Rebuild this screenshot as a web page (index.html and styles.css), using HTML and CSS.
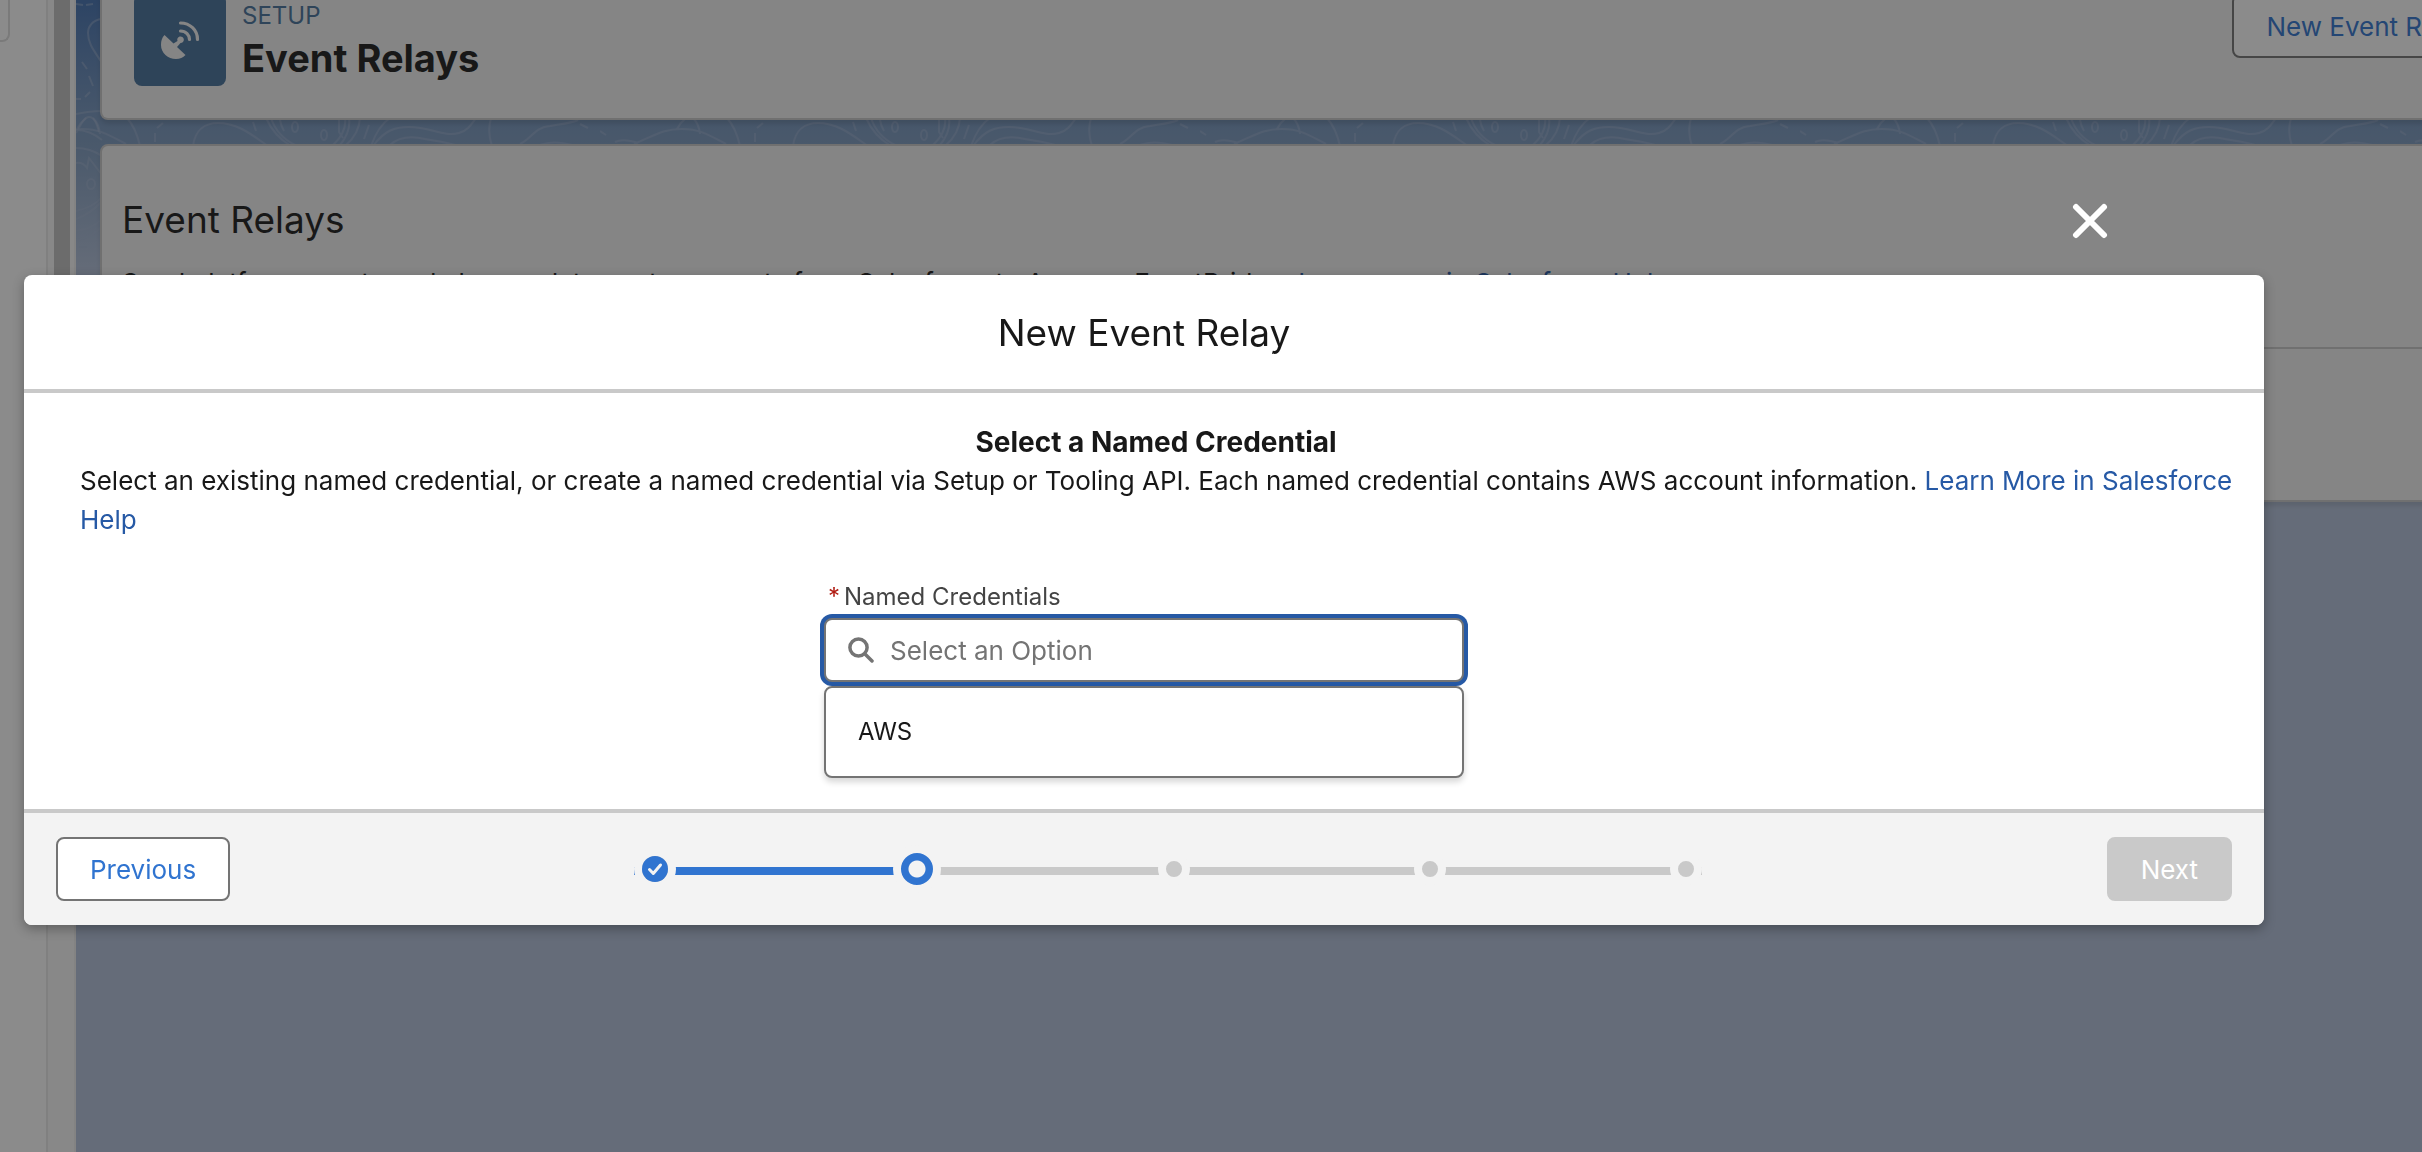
FILE: index.html
```html
<!DOCTYPE html>
<html lang="en">
<head>
<meta charset="utf-8">
<title>Event Relays</title>
<link rel="stylesheet" href="styles.css">
</head>
<body>
<div class="app">
  <aside class="sidebar"><div class="sidebar-card"></div></aside>
  <div class="gutter"><div class="scroll-thumb"></div></div>
  <main class="workspace">
    <svg class="contours" aria-hidden="true">
      <defs>
        <pattern id="topo" width="600" height="280" patternUnits="userSpaceOnUse" x="-76">
          <g fill="none" stroke="#a3b5d2" stroke-opacity=".45" stroke-width="2">
            <path d="M15 142q8-4 23 1M34 144C54 136 62 129 82 129s30 8 44 15M77 129q3-6 9-11M93 118q6 6 7 16M127 118q9 10 13 28M155 142v-9M157 128l6-5M193 146c2-16 12-23 25-23 20 0 34 12 50 23M253 122l3 9M266 118q8 18 25 28M271 118q6 18 24 27M280 120q1 6 4 11M345 118q2 14-12 27M339 120v12l4 6M349 118q2 14-9 27M360 118q-1 16-14 27M369 125l-5 14M390 118q-12 8-19 28M373 146c12-16 22-19 36-19 22 0 34 10 50 6 8-2 12-8 17-15M390 145c10-9 22-9 35-6 10 2 20 3 30 6M491 118q-4 14 1 28M520 144c12-6 15-17 30-18 12-2 22-3 28-6M540 145q14-5 32 0M0 131l6 4M580 124l8 4"/>
            <ellipse cx="295" cy="127" rx="3" ry="5"/>
            <ellipse cx="324" cy="135" rx="3" ry="5"/>
          </g>
        </pattern>
      </defs>
      <rect width="100%" height="280" fill="url(#topo)"/>
      <g transform="translate(-76 0)" fill="none" stroke="#a3b5d2" stroke-opacity=".45" stroke-width="2">
        <path d="M76 4l7 1M86 5l7-1M102 19c-10 1-14 8-14 14 0 12 8 20 14 30M82 62l5 7M89 76l4 10M90 92l-5 5M76 99h5M76 114q14-3 26-3M76 133c3-4 7-16 13-16s8 8 10 15M76 130q14 0 26 10M76 148q14 0 26 8M76 163q7-1 11 5l2-10 13 17M76 211q18-4 26-14M76 219q16-6 26-18M76 231q16-2 26-12M76 240q16-2 26-14M79 247h8"/>
        <ellipse cx="91" cy="184" rx="4" ry="5"/>
      </g>
    </svg>
    <header class="page-header">
      <span class="tile">
        <svg viewBox="160 20 40 40" width="40" height="40" aria-hidden="true">
          <path fill="#f3f3f3" d="M164.500 35L173.500 43.500 177.500 41A3.300 3.300 0 1 1 180.500 43L177 47 185.500 55C183 57.500 180 59 176 59C168 59 161 53 161 45C161 41 162 37.500 164.500 35Z"/>
          <path fill="none" stroke="#f3f3f3" stroke-width="3.200" stroke-linecap="round" d="M180.500 31C186 31 189.500 35 189.500 39.500M180.500 23C190 23 197.500 30 197.500 39.500"/>
        </svg>
      </span>
      <div class="page-title">
        <p class="eyebrow">SETUP</p>
        <h1>Event Relays</h1>
      </div>
      <button class="btn btn-neutral" type="button">New Event Relay</button>
    </header>
    <section class="card">
      <div class="card-top">
        <h2>Event Relays</h2>
        <p>Send platform events and change data capture events from Salesforce to Amazon EventBridge. <a href="#">Learn more in Salesforce Help</a></p>
      </div>
      <div class="card-rest"></div>
    </section>
  </main>
</div>
<div class="backdrop"></div>
<div class="dialog-layer">
  <button class="close" type="button" aria-label="Close">
    <svg viewBox="0 0 36 40" width="36" height="40" aria-hidden="true"><path d="M4 6l28 28M32 6L4 34" fill="none" stroke="#fff" stroke-width="6" stroke-linecap="round"/></svg>
  </button>
  <section class="dialog" role="dialog" aria-labelledby="dlg-title">
    <header class="dialog-head"><h2 id="dlg-title">New Event Relay</h2></header>
    <div class="dialog-body">
      <div class="intro">
        <h3>Select a Named Credential</h3>
        <p>Select an existing named credential, or create a named credential via Setup or Tooling API. Each named credential contains AWS account information. <a href="#">Learn More in Salesforce Help</a></p>
      </div>
      <div class="field">
        <label for="cred"><span class="req">*</span>Named Credentials</label>
        <div class="combo">
          <svg viewBox="0 0 26 26" width="26" height="26" aria-hidden="true"><g fill="none" stroke="#747474" stroke-width="3.500" stroke-linecap="round"><circle cx="10.500" cy="10.500" r="8.600"/><path d="M17 17l7 7"/></g></svg>
          <input id="cred" type="text" placeholder="Select an Option">
        </div>
        <ul class="options" role="listbox"><li role="option">AWS</li></ul>
      </div>
    </div>
    <footer class="dialog-foot">
      <button class="btn btn-neutral" type="button">Previous</button>
      <ol class="progress">
        <li class="step step-done"><svg viewBox="0 0 26 26" width="26" height="26" aria-hidden="true"><circle cx="13" cy="13" r="13" fill="#3074d0"/><path d="M7.500 13.500l3.800 4L18.500 9" fill="none" stroke="#f3f3f3" stroke-width="3" stroke-linecap="round" stroke-linejoin="round"/></svg></li>
        <li class="step step-active"></li>
        <li class="step"></li>
        <li class="step"></li>
        <li class="step"></li>
      </ol>
      <button class="btn btn-next" type="button" disabled>Next</button>
    </footer>
  </section>
</div>
</body>
</html>
```
FILE: styles.css
```css
* { box-sizing: border-box; }
body {
  margin: 0;
  font: 26px/39px Inter, "Liberation Sans", sans-serif;
  color: #181818;
}
h1, h2, h3, p, ul, ol { margin: 0; padding: 0; }
ul, ol { list-style: none; }
a { color: #2659a5; text-decoration: none; }
button, input { font: inherit; }

/* page behind the dialog */
.app { display: flex; min-height: 100vh; overflow: hidden; }
.sidebar { flex: 0 0 48px; background: #fff; border-right: 2px solid #e9e9e9; }
.sidebar-card { width: 10px; height: 42px; border: solid #dcdcdc; border-width: 0 2px 2px 0; border-radius: 0 0 8px 0; }
.gutter { flex: 0 0 28px; padding: 0 4px 0 6px; background: #f8f8f8; border-right: 2px solid #eee; }
.scroll-thumb { width: 16px; height: 50vh; background: #c0c0c0; }
.workspace {
  position: relative;
  flex: 1 0 auto;
  width: calc(100% + 66px);
  padding: 0 24px;
  background: #b3c1da linear-gradient(#4270b0, #7394be 110px, #7c9abf 145px, #b3c1da 275px) no-repeat;
}
.contours { position: absolute; inset: 0; width: 100%; height: 280px; }
.page-header {
  position: relative;
  display: flex;
  align-items: flex-start;
  margin-top: -6px;
  padding: 0 32px 32px;
  background: #f3f3f3;
  border: 2px solid #c9c9c9;
  border-top: 0;
  border-radius: 0 0 8px 8px;
  box-shadow: 0 4px 4px rgba(0, 0, 0, .12);
}
.tile { display: flex; align-items: center; justify-content: center; width: 92px; height: 92px; border-radius: 8px; background: #45709a; }
.page-title { flex: 1; margin: 4px 16px; }
.eyebrow { font-size: 24px; line-height: 36px; color: #45709a; }
h1 { font-size: 38px; line-height: 48px; font-weight: 700; }
h2 { font-size: 37px; line-height: 48px; font-weight: 400; }
.card { position: relative; margin-top: 24px; background: #f3f3f3; border: 2px solid #c9c9c9; border-radius: 8px; box-shadow: 0 4px 4px rgba(0, 0, 0, .1); }
.card-top { padding: 50px 20px 45px; border-bottom: 2px solid #c9c9c9; }
.card-top p { margin-top: 19px; }
.card-rest { height: 151px; }
.backdrop { position: fixed; inset: 0; background: rgba(24, 24, 24, .5); }

.btn { height: 64px; padding: 0 32px; border: 2px solid #747474; border-radius: 8px; line-height: 39px; white-space: nowrap; }
.btn-neutral { background: #fff; color: #3074d0; }
.btn-next { background: #c9c9c9; border-color: #c9c9c9; color: #fff; }

/* dialog */
.dialog-layer { position: absolute; top: 0; left: 0; right: 0; padding: 201px 158px 24px 24px; }
.close { display: block; margin: 0 156px 34px auto; padding: 0; height: 40px; border: 0; background: none; }
.close svg { display: block; }
.dialog { background: #fff; border-radius: 8px; box-shadow: 0 4px 12px rgba(0, 0, 0, .3); }
.dialog-head { padding: 34px 32px 32px; border-bottom: 4px solid #c9c9c9; text-align: center; }
.dialog-body { padding: 31px 32px; }
.intro { padding-left: 24px; }
.intro p { margin-right: -12px; }
h3 { font-size: 28px; line-height: 37px; font-weight: 700; text-align: center; }
.field { position: relative; width: 640px; max-width: 100%; margin: 40px auto 0; padding-bottom: 96px; }
.field label { display: block; padding: 0 4px 3px; font-size: 24px; line-height: 36px; color: #444; }
.req { margin-right: 4px; color: #b11b12; }
.combo {
  display: flex;
  align-items: center;
  gap: 16px;
  height: 64px;
  padding: 0 22px;
  background: #fff;
  border: 2px solid #747474;
  border-radius: 8px;
  box-shadow: 0 0 0 4px #2659a5;
}
.combo input { flex: 1; min-width: 0; padding: 0; border: 0; outline: 0; background: none; color: #181818; }
.combo input::placeholder { color: #747474; opacity: 1; }
.options {
  position: absolute;
  left: 0;
  right: 0;
  bottom: 0;
  padding: 26px 32px;
  background: #fff;
  border: 2px solid #747474;
  border-radius: 8px;
  box-shadow: 0 4px 6px rgba(0, 0, 0, .16);
  font-size: 24px;
  line-height: 36px;
}
.dialog-foot {
  display: flex;
  align-items: center;
  justify-content: space-between;
  padding: 24px 32px;
  background: #f3f3f3;
  border-top: 4px solid #c9c9c9;
  border-radius: 0 0 8px 8px;
}
.progress {
  display: flex;
  align-items: center;
  justify-content: space-between;
  width: 1068px;
  height: 48px;
  background:
    linear-gradient(#3074d0, #3074d0) 0 22px / 284px 8px no-repeat,
    linear-gradient(#c9c9c9, #c9c9c9) 0 22px / 100% 8px no-repeat;
}
.step { width: 32px; height: 32px; border: 8px solid #f3f3f3; border-radius: 50%; background: #c9c9c9; }
.step-done { width: 42px; height: 42px; }
.step-done svg { display: block; }
.step-active { width: 48px; height: 48px; margin: 0 -7px; background: radial-gradient(circle, #f3f3f3 8px, #3074d0 9px); }
```
